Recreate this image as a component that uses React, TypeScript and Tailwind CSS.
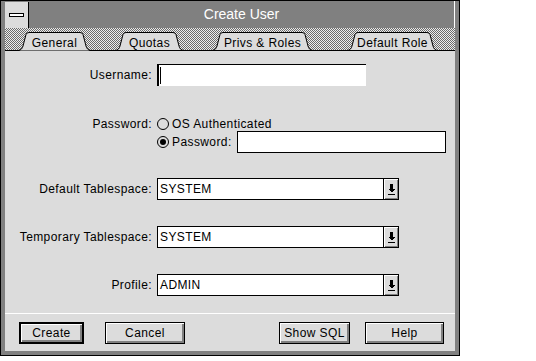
import React from "react";

const font = "font-['Liberation_Sans',Arial,sans-serif] tracking-[0.4px]";

// Win 3.1 style notebook tab: slanted sides, flat top
const Tab: React.FC<{ label: string; width: number; active?: boolean; className?: string }> = ({
  label,
  width,
  active,
  className,
}) => {
  const w = width;
  const h = 19;
  const outline = `M0,${h - 0.5} C3,${h - 0.5} 4.5,${h - 3} 5,${h - 5} L8,2.5 Q8.6,0.5 11,0.5 L${w - 11},0.5 Q${w - 8.6},0.5 ${w - 8},2.5 L${w - 5},${h - 5} C${w - 4.5},${h - 3} ${w - 3},${h - 0.5} ${w},${h - 0.5}`;
  return (
    <div
      className={`relative h-[19px] -mb-px flex items-center justify-center ${active ? "z-10" : ""} ${className ?? ""}`}
      style={{ width: w }}
    >
      <svg className="absolute inset-0" width={w} height={h} viewBox={`0 0 ${w} ${h}`}>
        <path d={`${outline} Z`} fill="#dcdcdc" stroke="none" />
        <path d={active ? outline : `${outline} Z`} fill="none" stroke="#000" strokeWidth="1" />
      </svg>
      <span className="relative text-[12px] leading-none text-black pt-[2px]">{label}</span>
    </div>
  );
};

const DropArrow = () => (
  <svg width="7" height="11" viewBox="0 0 7 11" shapeRendering="crispEdges">
    <rect x="2" y="0" width="3" height="5" fill="#000" />
    <path d="M0,5 H7 L3.5,8.5 Z" fill="#000" />
    <rect x="0" y="10" width="7" height="1" fill="#000" />
  </svg>
);

const Combo: React.FC<{ value: string }> = ({ value }) => (
  <div className="flex w-[242px] h-[22px] border border-black bg-white">
    <div className="flex-1 flex items-center pl-[2px] text-[12px] text-black">{value}</div>
    <div className="w-[15px] border-l border-black bg-[#dcdcdc] flex items-center justify-center shadow-[inset_1px_1px_0_#fff,inset_-1px_-1px_0_#808080]">
      <DropArrow />
    </div>
  </div>
);

const Radio: React.FC<{ checked?: boolean }> = ({ checked }) => (
  <div className="w-[12px] h-[12px] rounded-full border border-black bg-[#dcdcdc] flex items-center justify-center">
    {checked && <div className="w-[6px] h-[6px] rounded-full bg-black" />}
  </div>
);

const Btn: React.FC<{ label: string; w: string; primary?: boolean }> = ({ label, w, primary }) => (
  <button
    className={`${w} h-[22px] bg-[#dcdcdc] text-[12px] text-black ${
      primary ? "border-2" : "border"
    } border-black shadow-[inset_1px_1px_0_#fff,inset_-2px_-2px_0_#808080] flex items-center justify-center`}
  >
    {label}
  </button>
);

const Label: React.FC<{ children?: React.ReactNode }> = ({ children }) => (
  <div className="w-[147px] mr-[5px] text-right text-[12px] text-black">{children}</div>
);

export default function App() {
  return (
    <div className={`min-h-screen bg-white ${font}`}>
      <div className="w-[460px] h-[356px] border border-black bg-[#808080] flex flex-col">
        {/* title bar */}
        <div className="h-[27px] flex pl-[4px]">
          <div className="w-[24px] h-[26px] mt-[1px] bg-[#dcdcdc] border-r border-black flex items-center justify-center">
            <div className="w-[15px] h-[4px] bg-white border border-black" />
          </div>
          <div className="flex-1 flex items-center justify-center mr-[4px] border-r border-white text-[14px] text-white tracking-normal">
            Create User
          </div>
        </div>

        <div className="flex-1 flex flex-col mx-[4px] mb-[4px]">
          {/* tab strip */}
          <div className="h-[23px] flex items-end border-b border-black bg-[image:repeating-conic-gradient(#6a6a6a_0_25%,#eeeeee_0_50%)] bg-[length:2px_2px]">
            <Tab label="General" width={73} active className="ml-[13px]" />
            <Tab label="Quotas" width={69} className="ml-[24px]" />
            <Tab label="Privs & Roles" width={101} className="ml-[28px]" />
            <Tab label="Default Role" width={91} className="ml-[34px]" />
          </div>

          {/* page */}
          <div className="flex-1 bg-[#dcdcdc] flex flex-col pt-[13px] pb-[6px]">
            <div className="flex items-center">
              <Label>Username:</Label>
              <div className="w-[209px] h-[22px] bg-white border-t border-l-2 border-black flex items-center">
                <div className="ml-[1px] w-px h-[17px] bg-black" />
              </div>
            </div>

            <div className="flex items-center mt-[31px] h-[14px]">
              <Label>Password:</Label>
              <div className="flex items-center gap-[3px] text-[12px] text-black">
                <Radio />
                <span>OS Authenticated</span>
              </div>
            </div>
            <div className="flex items-center h-[22px]">
              <Label />
              <div className="w-[80px] flex items-center gap-[3px] text-[12px] text-black">
                <Radio checked />
                <span>Password:</span>
              </div>
              <div className="w-[209px] h-[22px] bg-white border border-black" />
            </div>

            <div className="flex items-center mt-[25px]">
              <Label>Default Tablespace:</Label>
              <Combo value="SYSTEM" />
            </div>
            <div className="flex items-center mt-[26px]">
              <Label>Temporary Tablespace:</Label>
              <Combo value="SYSTEM" />
            </div>
            <div className="flex items-center mt-[26px]">
              <Label>Profile:</Label>
              <Combo value="ADMIN" />
            </div>

            <div className="mt-[17px] border-t border-white" />

            <div className="mt-[8px] flex justify-between pl-[14px] pr-[11px]">
              <div className="flex gap-[21px]">
                <Btn label="Create" w="w-[65px]" primary />
                <Btn label="Cancel" w="w-[80px]" />
              </div>
              <div className="flex gap-[15px]">
                <Btn label="Show SQL" w="w-[71px]" />
                <Btn label="Help" w="w-[79px]" />
              </div>
            </div>
          </div>
        </div>
      </div>
    </div>
  );
}
